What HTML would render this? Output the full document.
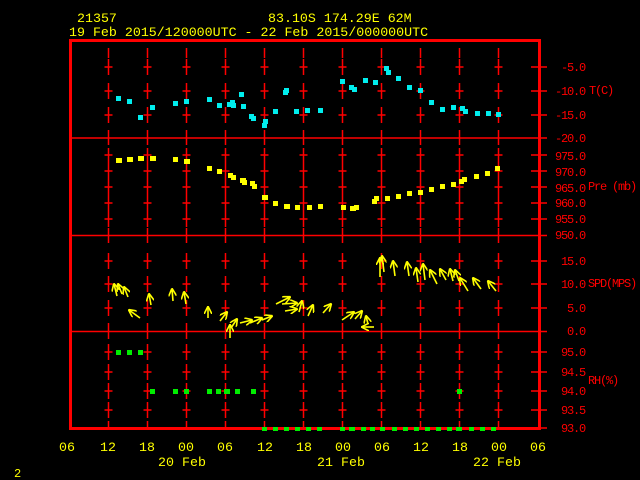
<!DOCTYPE html>
<html><head><meta charset="utf-8"><style>
html,body{margin:0;padding:0;background:#000;width:640px;height:480px;overflow:hidden}
svg{display:block}
text{font-family:"Liberation Mono",monospace}
</style></head><body>
<svg width="640" height="480" viewBox="0 0 640 480" xmlns="http://www.w3.org/2000/svg">
<defs>
<g id="col" stroke="#f00" stroke-width="1.5" fill="none">
<path d="M0 48V58M0 59V75M0 83V99M0 107V123M0 130V145M0 148V164M0 164V180M0 180V195M0 195V211M0 211V227M0 228V243M0 253V269M0 276V292M0 300V316M0 323V339M0 344V360M0 364V380M0 383V399M0 402V418M0 421V430"/>
<path d="M-4 67H4M-4 91H4M-4 115H4M-4 155H4M-4 171H4M-4 187H4M-4 203H4M-4 219H4M-4 261H4M-4 284H4M-4 308H4M-4 352H4M-4 372H4M-4 391H4M-4 410H4"/>
</g>
<marker id="ah" viewBox="0 0 10 10" refX="9" refY="5" markerWidth="5" markerHeight="5" orient="auto"><path d="M0 0L10 5L0 10" fill="none" stroke="#ff0" stroke-width="2"/></marker>
</defs>
<g fill="#ff0" font-size="13.3">
<text x="77" y="22">21357</text>
<text x="268" y="22">83.10S  174.29E    62M</text>
<text x="69" y="36">19 Feb 2015/120000UTC - 22 Feb 2015/000000UTC</text>
<text x="14" y="477" font-size="12">2</text>
</g>
<use href="#col" x="108.5"/><use href="#col" x="147.5"/><use href="#col" x="186.5"/><use href="#col" x="225.5"/><use href="#col" x="264.5"/><use href="#col" x="303.5"/><use href="#col" x="342.5"/><use href="#col" x="381.5"/><use href="#col" x="420.5"/><use href="#col" x="459.5"/><use href="#col" x="498.5"/>
<g stroke="#f00" stroke-width="1.5">
<path d="M71 138H547M71 235.5H547M71 331.5H547"/>
<path d="M531 67H547M531 91H547M531 115H547M531 155H547M531 171H547M531 187H547M531 203H547M531 219H547M531 261H547M531 284H547M531 308H547M531 352H547M531 372H547M531 391H547M531 410H547M531 428H547"/>
</g>
<rect x="70.5" y="40.5" width="469" height="388" fill="none" stroke="#f00" stroke-width="3"/>
<g fill="#f00" font-size="12" letter-spacing="-1.2" text-anchor="end">
<text x="585" y="71">-5.0</text><text x="585" y="95">-10.0</text><text x="585" y="119">-15.0</text><text x="585" y="142">-20.0</text>
<text x="585" y="160">975.0</text><text x="585" y="176">970.0</text><text x="585" y="192">965.0</text><text x="585" y="207">960.0</text><text x="585" y="223">955.0</text><text x="585" y="239">950.0</text>
<text x="585" y="265">15.0</text><text x="585" y="288">10.0</text><text x="585" y="312">5.0</text><text x="585" y="335">0.0</text>
<text x="585" y="356">95.0</text><text x="585" y="376">94.5</text><text x="585" y="395">94.0</text><text x="585" y="414">93.5</text><text x="585" y="432">93.0</text>
</g>
<g fill="#f00" font-size="12" letter-spacing="-1.2">
<text x="589" y="94">T(C)</text><text x="588" y="190">Pre (mb)</text><text x="588" y="287">SPD(MPS)</text><text x="588" y="384">RH(%)</text>
</g>
<g fill="#ff0" font-size="13.3" text-anchor="middle">
<text x="67" y="451">06</text><text x="108" y="451">12</text><text x="147" y="451">18</text><text x="186" y="451">00</text><text x="225" y="451">06</text><text x="265" y="451">12</text><text x="304" y="451">18</text><text x="343" y="451">00</text><text x="382" y="451">06</text><text x="421" y="451">12</text><text x="460" y="451">18</text><text x="499" y="451">00</text><text x="538" y="451">06</text>
<text x="182" y="466">20 Feb</text><text x="341" y="466">21 Feb</text><text x="497" y="466">22 Feb</text>
</g>
<g fill="#0ee">
<rect x="116" y="96" width="5" height="5"/><rect x="127" y="99" width="5" height="5"/><rect x="138" y="115" width="5" height="5"/><rect x="150" y="105" width="5" height="5"/><rect x="173" y="101" width="5" height="5"/><rect x="184" y="99" width="5" height="5"/><rect x="207" y="97" width="5" height="5"/><rect x="217" y="103" width="5" height="5"/><rect x="227" y="102" width="5" height="5"/><rect x="230" y="100" width="5" height="5"/><rect x="231" y="103" width="5" height="5"/><rect x="239" y="92" width="5" height="5"/><rect x="241" y="104" width="5" height="5"/><rect x="249" y="114" width="5" height="5"/><rect x="251" y="116" width="5" height="5"/><rect x="262" y="123" width="5" height="5"/><rect x="263" y="119" width="5" height="5"/><rect x="273" y="109" width="5" height="5"/><rect x="283" y="90" width="5" height="5"/><rect x="284" y="88" width="5" height="5"/><rect x="294" y="109" width="5" height="5"/><rect x="305" y="108" width="5" height="5"/><rect x="318" y="108" width="5" height="5"/>
<rect x="340" y="79" width="5" height="5"/><rect x="349" y="85" width="5" height="5"/><rect x="352" y="87" width="5" height="5"/><rect x="363" y="78" width="5" height="5"/><rect x="373" y="80" width="5" height="5"/><rect x="384" y="66" width="5" height="5"/><rect x="386" y="70" width="5" height="5"/><rect x="396" y="76" width="5" height="5"/><rect x="407" y="85" width="5" height="5"/><rect x="418" y="88" width="5" height="5"/><rect x="429" y="100" width="5" height="5"/><rect x="440" y="107" width="5" height="5"/><rect x="451" y="105" width="5" height="5"/><rect x="460" y="106" width="5" height="5"/><rect x="463" y="109" width="5" height="5"/><rect x="475" y="111" width="5" height="5"/><rect x="486" y="111" width="5" height="5"/><rect x="496" y="112" width="5" height="5"/>
</g>
<g fill="#ff0">
<rect x="116" y="158" width="6" height="5"/><rect x="127" y="157" width="6" height="5"/><rect x="138" y="156" width="6" height="5"/><rect x="150" y="156" width="6" height="5"/><rect x="173" y="157" width="5" height="5"/><rect x="184" y="159" width="6" height="5"/><rect x="207" y="166" width="5" height="5"/><rect x="217" y="169" width="5" height="5"/><rect x="228" y="173" width="5" height="5"/><rect x="231" y="175" width="5" height="5"/><rect x="240" y="178" width="6" height="5"/><rect x="242" y="180" width="5" height="5"/><rect x="250" y="181" width="5" height="5"/><rect x="252" y="184" width="5" height="5"/><rect x="262" y="195" width="6" height="5"/><rect x="273" y="201" width="5" height="5"/><rect x="284" y="204" width="6" height="5"/><rect x="295" y="205" width="5" height="5"/><rect x="307" y="205" width="5" height="5"/><rect x="318" y="204" width="5" height="5"/>
<rect x="341" y="205" width="5" height="5"/><rect x="350" y="206" width="6" height="5"/><rect x="354" y="205" width="5" height="5"/><rect x="372" y="199" width="5" height="5"/><rect x="374" y="196" width="5" height="5"/><rect x="385" y="196" width="5" height="5"/><rect x="396" y="194" width="5" height="5"/><rect x="407" y="191" width="5" height="5"/><rect x="418" y="190" width="5" height="5"/><rect x="429" y="187" width="5" height="5"/><rect x="440" y="184" width="5" height="5"/><rect x="451" y="182" width="5" height="5"/><rect x="459" y="179" width="5" height="5"/><rect x="462" y="177" width="5" height="5"/><rect x="474" y="174" width="5" height="5"/><rect x="485" y="171" width="5" height="5"/><rect x="495" y="166" width="5" height="5"/>
</g>
<g stroke="#ff0" stroke-width="1.6" fill="none" marker-end="url(#ah)">
<path d="M117 296L114 284"/><path d="M122 294L118 284"/><path d="M128 297L124 287"/><path d="M140 318L129 310"/><path d="M151 305L149 294"/><path d="M173 301L172 289"/><path d="M186 304L184 292"/><path d="M208 318L208 307"/><path d="M220 321L227 312"/><path d="M230 338L230 325"/><path d="M231 328L237 319"/><path d="M240 323L252 320"/><path d="M250 323L262 318"/><path d="M262 320L272 316"/><path d="M282 304L297 303"/><path d="M276 304L290 297"/><path d="M285 311L297 309"/><path d="M299 312L302 301"/><path d="M308 316L313 305"/><path d="M323 313L331 304"/><path d="M342 320L354 312"/><path d="M355 319L362 311"/><path d="M368 324L366 316"/><path d="M374 327L362 327"/><path d="M380 277L380 258"/><path d="M384 272L382 256"/><path d="M395 276L393 261"/><path d="M409 276L407 262"/><path d="M418 282L416 268"/><path d="M425 280L423 264"/><path d="M437 284L430 270"/><path d="M446 280L440 269"/><path d="M453 281L450 269"/><path d="M459 281L455 270"/><path d="M468 291L460 278"/><path d="M481 289L473 278"/><path d="M496 291L488 281"/>
</g>
<g fill="#0e0">
<rect x="116" y="350" width="5" height="5"/><rect x="127" y="350" width="5" height="5"/><rect x="138" y="350" width="5" height="5"/>
<rect x="150" y="389" width="5" height="5"/><rect x="173" y="389" width="5" height="5"/><rect x="184" y="389" width="5" height="5"/><rect x="207" y="389" width="5" height="5"/><rect x="216" y="389" width="5" height="5"/><rect x="224" y="389" width="6" height="5"/><rect x="235" y="389" width="5" height="5"/><rect x="251" y="389" width="5" height="5"/><rect x="457" y="389" width="5" height="5"/>
<rect x="262" y="427" width="5" height="4"/><rect x="273" y="427" width="5" height="4"/><rect x="284" y="427" width="5" height="4"/><rect x="295" y="427" width="5" height="4"/><rect x="306" y="427" width="5" height="4"/><rect x="317" y="427" width="5" height="4"/><rect x="340" y="427" width="5" height="4"/><rect x="349" y="427" width="6" height="4"/><rect x="361" y="427" width="5" height="4"/><rect x="370" y="427" width="5" height="4"/><rect x="380" y="427" width="5" height="4"/><rect x="392" y="427" width="5" height="4"/><rect x="403" y="427" width="5" height="4"/><rect x="414" y="427" width="5" height="4"/><rect x="425" y="427" width="5" height="4"/><rect x="436" y="427" width="5" height="4"/><rect x="447" y="427" width="5" height="4"/><rect x="456" y="427" width="6" height="4"/><rect x="469" y="427" width="5" height="4"/><rect x="480" y="427" width="5" height="4"/><rect x="491" y="427" width="5" height="4"/>
</g>
</svg>
</body></html>
